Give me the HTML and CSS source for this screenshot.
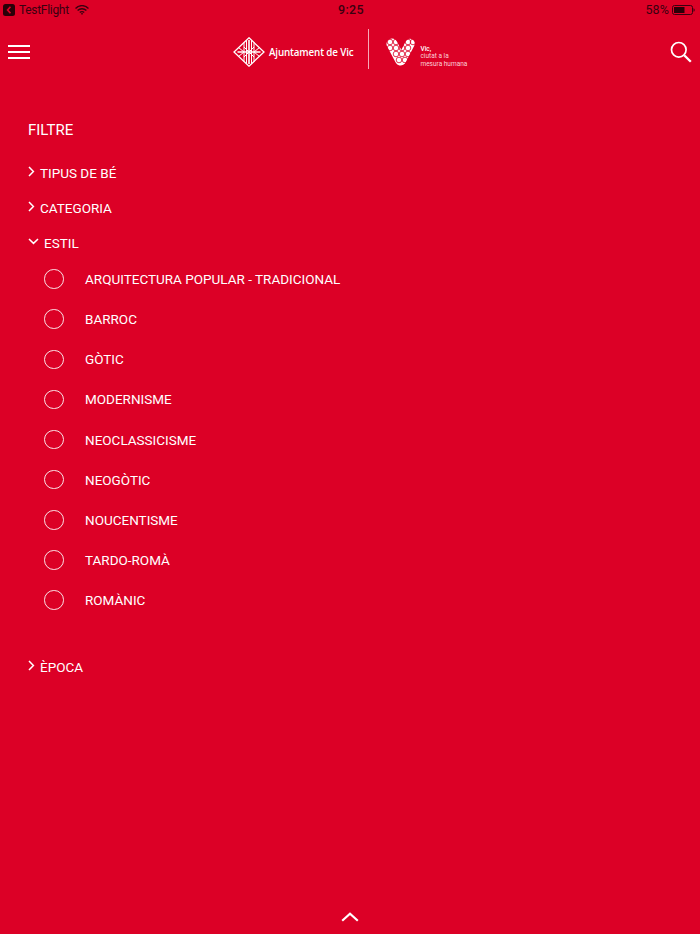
FILE: index.html
```html
<!DOCTYPE html>
<html lang="ca">
<head>
<meta charset="utf-8">
<title>Filtre</title>
<link rel="stylesheet" href="styles.css">
</head>
<body>
<div class="page">
  <div class="status">
    <div class="status-left">
      <svg class="back-badge" width="12" height="12" viewBox="0 0 12 12"><rect width="12" height="12" rx="2.5" fill="#2a0008"/><path d="M7.5 2.8 4.6 6l2.9 3.2" fill="none" stroke="#dc0026" stroke-width="1.7"/></svg>
      <span class="status-app">TestFlight</span>
      <svg class="wifi" width="14" height="10" viewBox="0 0 14 10"><path d="M.5 3.4a9 9 0 0 1 13 0M2.6 5.6a6 6 0 0 1 8.8 0M4.8 7.6a3 3 0 0 1 4.4 0" fill="none" stroke="#3a0010" stroke-width="1.4"/><path d="M5.9 8.6 7 9.9l1.1-1.3a1.5 1.5 0 0 0-2.2 0z" fill="#3a0010"/></svg>
    </div>
    <div class="status-time">9:25</div>
    <div class="status-right">
      <span>58%</span>
      <svg width="23" height="10" viewBox="0 0 23 10"><rect x=".5" y=".5" width="20" height="9" rx="2" fill="none" stroke="#3a0010"/><rect x="2" y="2" width="10.5" height="6" fill="#2a0008"/><path d="M21.5 3.2c.8.2 1.2.9 1.2 1.8s-.4 1.6-1.2 1.8z" fill="#3a0010"/></svg>
    </div>
  </div>

  <header class="topbar">
    <div class="burger"><i></i><i></i><i></i></div>
    <div class="brand">
      <div class="brand-main">
        <svg width="32" height="30" viewBox="0 0 32 30">
          <path d="M16 .8 31 15 16 29.2 1 15z" fill="none" stroke="#fff" stroke-width="1.3"/>
          <path d="M11 5.6v18.8M13.5 3.4v23.2M18.5 3.4v23.2M21 5.6v18.8" stroke="#fff" stroke-width="1"/>
          <path d="M4.500 15h23M16 3v24" stroke="#fff" stroke-width="1.600"/>
          <path d="M5.500 10.500 11 15l-5.500 4.500M26.500 10.500 21 15l5.500 4.500M11 10l5 5 5-5M11 20l5-5 5 5" fill="none" stroke="#fff" stroke-width="1"/>
        </svg>
        <span class="brand-name">Ajuntament de Vic</span>
      </div>
      <div class="brand-rule"></div>
      <div class="brand-vic">
        <svg width="30" height="28" viewBox="0 0 30 28">
          <path d="M6 6 14.500 22" fill="none" stroke="#fff" stroke-width="11" stroke-linecap="round"/>
          <path d="M24 5.500 15.500 22" fill="none" stroke="#fff" stroke-width="9.500" stroke-linecap="round"/>
          <g fill="none" stroke="#dc0026" stroke-width=".8">
            <circle cx="4" cy="4" r="2.800"/><circle cx="10" cy="4" r="2.800"/><circle cx="4" cy="10" r="2.800"/><circle cx="10" cy="10" r="2.800"/><circle cx="16" cy="10" r="2.800"/><circle cx="22" cy="4" r="2.800"/><circle cx="27" cy="4" r="2.800"/><circle cx="22" cy="10" r="2.800"/><circle cx="10" cy="16" r="2.800"/><circle cx="16" cy="16" r="2.800"/><circle cx="22" cy="16" r="2.800"/><circle cx="13" cy="22" r="2.800"/><circle cx="19" cy="22" r="2.800"/>
          </g>
        </svg>
        <div class="vic-text"><b>Vic,</b><span>ciutat a la</span><span>mesura humana</span></div>
      </div>
    </div>
    <svg class="search" width="22" height="22" viewBox="0 0 22 22"><circle cx="8.800" cy="8.800" r="7.300" fill="none" stroke="#fff" stroke-width="1.700"/><path d="m14.200 14.200 6.600 6.600" stroke="#fff" stroke-width="2.300"/></svg>
  </header>

  <main class="filter">
    <h1 class="filter-title">FILTRE</h1>
    <div class="group"><svg class="chev" width="7" height="11" viewBox="0 0 7 11"><path d="m1 1 4.400 4.500L1 10" fill="none" stroke="#fff" stroke-width="1.500"/></svg><span>TIPUS DE BÉ</span></div>
    <div class="group"><svg class="chev" width="7" height="11" viewBox="0 0 7 11"><path d="m1 1 4.400 4.500L1 10" fill="none" stroke="#fff" stroke-width="1.500"/></svg><span>CATEGORIA</span></div>
    <div class="group"><svg class="chev-down" width="11" height="7" viewBox="0 0 11 7"><path d="m1 1 4.500 4.400L10 1" fill="none" stroke="#fff" stroke-width="1.500"/></svg><span>ESTIL</span></div>
    <ul class="options">
      <li><i class="radio"></i>ARQUITECTURA POPULAR - TRADICIONAL</li>
      <li><i class="radio"></i>BARROC</li>
      <li><i class="radio"></i>GÒTIC</li>
      <li><i class="radio"></i>MODERNISME</li>
      <li><i class="radio"></i>NEOCLASSICISME</li>
      <li><i class="radio"></i>NEOGÒTIC</li>
      <li><i class="radio"></i>NOUCENTISME</li>
      <li><i class="radio"></i>TARDO-ROMÀ</li>
      <li><i class="radio"></i>ROMÀNIC</li>
    </ul>
    <div class="group"><svg class="chev" width="7" height="11" viewBox="0 0 7 11"><path d="m1 1 4.400 4.500L1 10" fill="none" stroke="#fff" stroke-width="1.500"/></svg><span>ÈPOCA</span></div>
  </main>

  <footer class="bottom">
    <svg width="18" height="10" viewBox="0 0 18 10"><path d="m1.200 8.800 7.800-7 7.800 7" fill="none" stroke="#fff" stroke-width="2.200"/></svg>
  </footer>
</div>
</body>
</html>
```

FILE: styles.css
```css
* { box-sizing: border-box; }
html, body { margin: 0; padding: 0; }
body {
  background: #dc0026;
  color: #fff;
  font-family: Roboto, Inter, "Liberation Sans", sans-serif;
}
.page {
  width: 700px;
  height: 934px;
  display: flex;
  flex-direction: column;
  overflow: hidden;
}
.status {
  height: 20px;
  padding: 0 5px 1px 3px;
  display: grid;
  grid-template-columns: 1fr auto 1fr;
  align-items: center;
  font-size: 12.500px;
  color: #3a0010;
}
.status-left { display: flex; align-items: center; gap: 4px; }
.status-app { font-size: 12px; letter-spacing: -.3px; }
.wifi { margin-left: 2px; }
.status-time { font-weight: 500; padding-left: 4px; letter-spacing: .4px; }
.status-right { display: flex; justify-content: flex-end; align-items: center; gap: 3px; letter-spacing: .1px; }
.topbar {
  height: 64px;
  padding: 0 8px;
  display: flex;
  align-items: center;
}
.burger { width: 22px; display: flex; flex-direction: column; gap: 4px; }
.burger i { display: block; height: 2px; background: #fff; }
.brand {
  margin-left: 203px;
  display: flex;
  align-items: center;
  height: 40px;
}
.brand-main { display: flex; align-items: center; gap: 4px; }
.brand-name { font-size: 9.800px; font-weight: 600; font-family: "Open Sans", sans-serif; letter-spacing: -.14px; white-space: nowrap; }
.brand-rule { width: 1px; height: 40px; background: #f7a9b8; margin: 0 17px 7px 15px; }
.brand-vic { display: flex; align-items: center; gap: 4px; }
.vic-text {
  display: flex;
  flex-direction: column;
  font-size: 6.500px;
  line-height: 7.500px;
  padding-top: 10px;
  white-space: nowrap;
  color: #fbd0d8;
}
.vic-text b { color: #fff; font-weight: 500; }
.search { margin-left: auto; }
.filter { flex: 1; padding: 37px 0 0 28px; }
.filter-title {
  margin: 0 0 16px;
  font-size: 15px;
  line-height: 18px;
  font-weight: 400;
}
.group {
  height: 35px;
  display: flex;
  align-items: center;
  gap: 5px;
  font-size: 13.500px;
}
.chev { margin-top: -2px; }
.chev-down { margin-top: -3px; }
.options {
  list-style: none;
  margin: -1px 0 29px;
  padding: 0 0 0 16px;
}
.options li {
  height: 40.125px;
  display: flex;
  align-items: center;
  font-size: 13.500px;
}
.radio {
  width: 19.500px;
  height: 19.500px;
  border: 1.200px solid #fbe3e8;
  border-radius: 50%;
  margin-right: 21.500px;
  flex: none;
}
.bottom {
  height: 34px;
  display: flex;
  justify-content: center;
  padding-top: 12px;
}
.bottom svg { display: block; }
```
